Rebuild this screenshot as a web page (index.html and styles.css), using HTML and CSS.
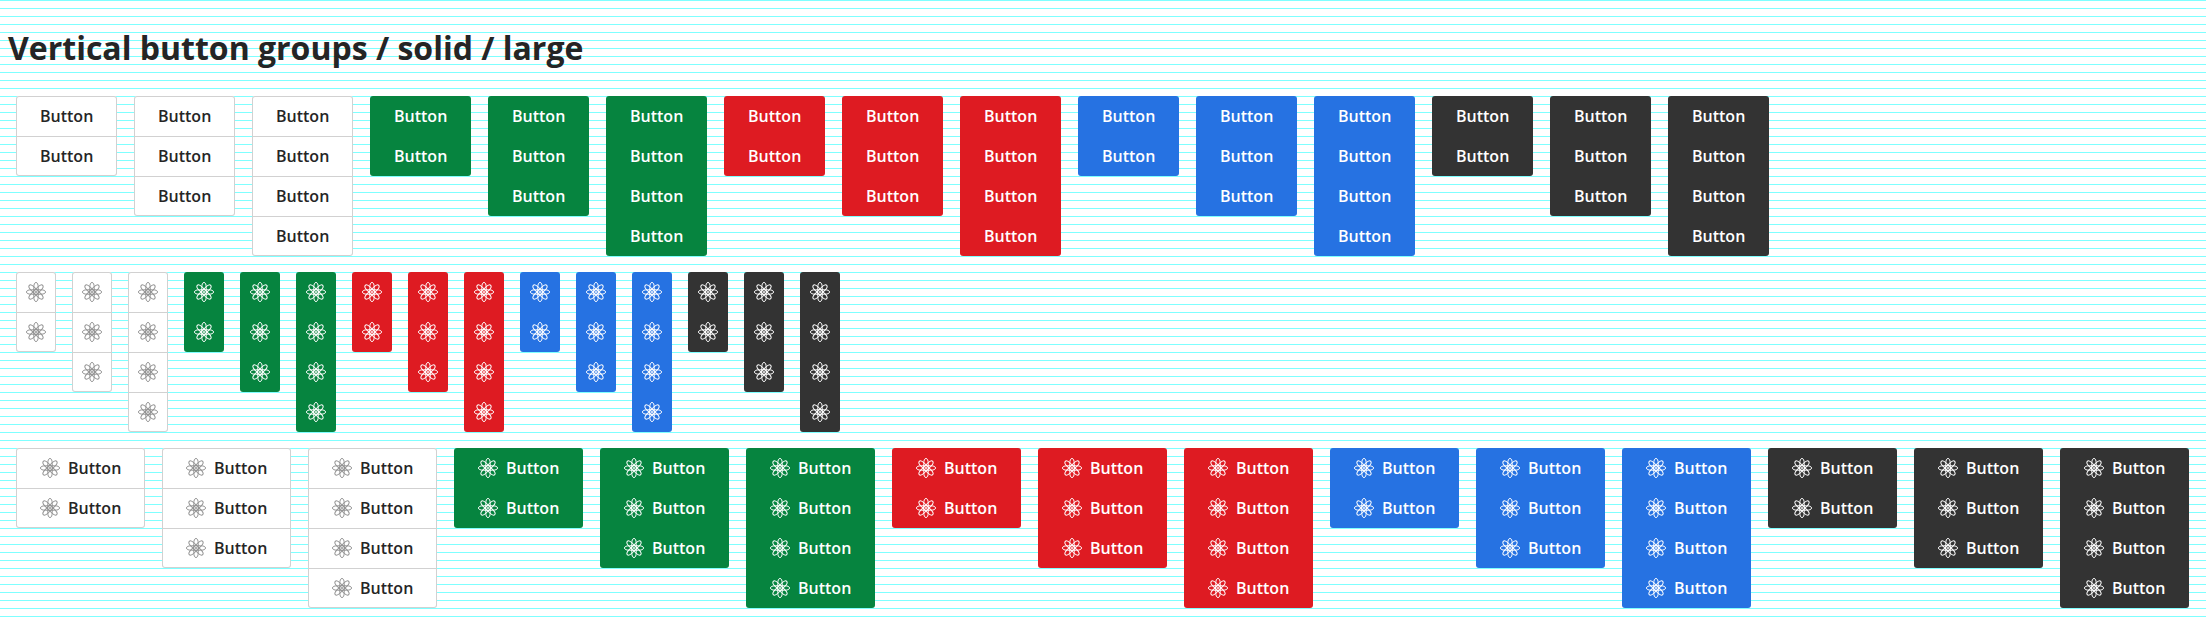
FILE: index.html
```
<!DOCTYPE html>
<html lang="en">
<head>
<meta charset="utf-8">
<title>Vertical button groups</title>
<link rel="stylesheet" href="styles.css">
</head>
<body>
<svg class="defs" aria-hidden="true">
  <symbol id="atom" viewBox="0 0 20 20">
    <g fill="none" stroke="currentColor" stroke-width="1">
      <path d="M5.5 7.8H14.5A5 2.2 0 0 1 14.5 12.2H5.5A5 2.2 0 0 1 5.5 7.8Z"/>
      <path transform="rotate(45 10 10)" d="M5.5 7.8H14.5A5 2.2 0 0 1 14.5 12.2H5.5A5 2.2 0 0 1 5.5 7.8Z"/>
      <path transform="rotate(90 10 10)" d="M5.5 7.8H14.5A5 2.2 0 0 1 14.5 12.2H5.5A5 2.2 0 0 1 5.5 7.8Z"/>
      <path transform="rotate(135 10 10)" d="M5.5 7.8H14.5A5 2.2 0 0 1 14.5 12.2H5.5A5 2.2 0 0 1 5.5 7.8Z"/>
    </g>
    <circle cx="10" cy="10" r="1" fill="currentColor"/>
  </symbol>
</svg>
<h1 class="title">Vertical button groups / solid / large</h1>
<main class="rows" id="rows"></main>
<script src="main.js"></script>
</body>
</html>
```
FILE: styles.css
```
body {
  margin: 0;
  min-height: 624px;
  font-family: "Open Sans", "Noto Sans", sans-serif;
  color: #252525;
  background: repeating-linear-gradient(to bottom, #7fffff 0, #7fffff 1px, #fff 1px, #fff 8px);
}
.defs { position: absolute; width: 0; height: 0; }
.title {
  margin: 0 0 24px;
  padding: 24px 8px 0;
  height: 72px;
  box-sizing: border-box;
  font-size: 32px;
  line-height: 48px;
  font-weight: 700;
}
.rows {
  display: flex;
  flex-direction: column;
  gap: 16px;
  padding-left: 16px;
}
.row { display: flex; align-items: flex-start; gap: 17px; }
.row-icon { gap: 16px; }
.group {
  display: flex;
  flex-direction: column;
  border-radius: 3px;
  overflow: hidden;
}
.row-label .group { width: 101px; }
.row-icon .group { width: 40px; }
.row-both .group { width: 129px; }
.button {
  display: flex;
  align-items: center;
  justify-content: flex-start;
  gap: 8px;
  box-sizing: border-box;
  height: 40px;
  margin: 0;
  padding: 0 0 0 24px;
  border: 0;
  background: none;
  color: inherit;
  font: 600 16px/24px "Open Sans", "Noto Sans", sans-serif;
}
.row-icon .button { padding: 0 10px; }
.icon { display: block; width: 20px; height: 20px; flex: none; }
.light { background: #fff; box-shadow: inset 0 0 0 1px #d1d1d1; }
.light .button + .button { box-shadow: inset 0 1px #d1d1d1; }
.light .icon { color: #929292; }
.green { background: #06843f; color: #fff; }
.red { background: #de1b22; color: #fff; }
.blue { background: #2672e2; color: #fff; }
.dark { background: #333; color: #fff; }
```
FILE: main.js
```
const icon = '<svg class="icon"><use href="#atom"/></svg>';
const content = { label: "<span>Button</span>", icon, both: icon + "<span>Button</span>" };
const colors = ["light", "green", "red", "blue", "dark"];
document.getElementById("rows").innerHTML = Object.entries(content).map(([kind, html]) =>
  `<div class="row row-${kind}">${colors.map(color => [2, 3, 4].map(count =>
    `<div class="group ${color}">${
      `<button class="button">${html}</button>`.repeat(count)
    }</div>`).join("")).join("")}</div>`).join("");
```
